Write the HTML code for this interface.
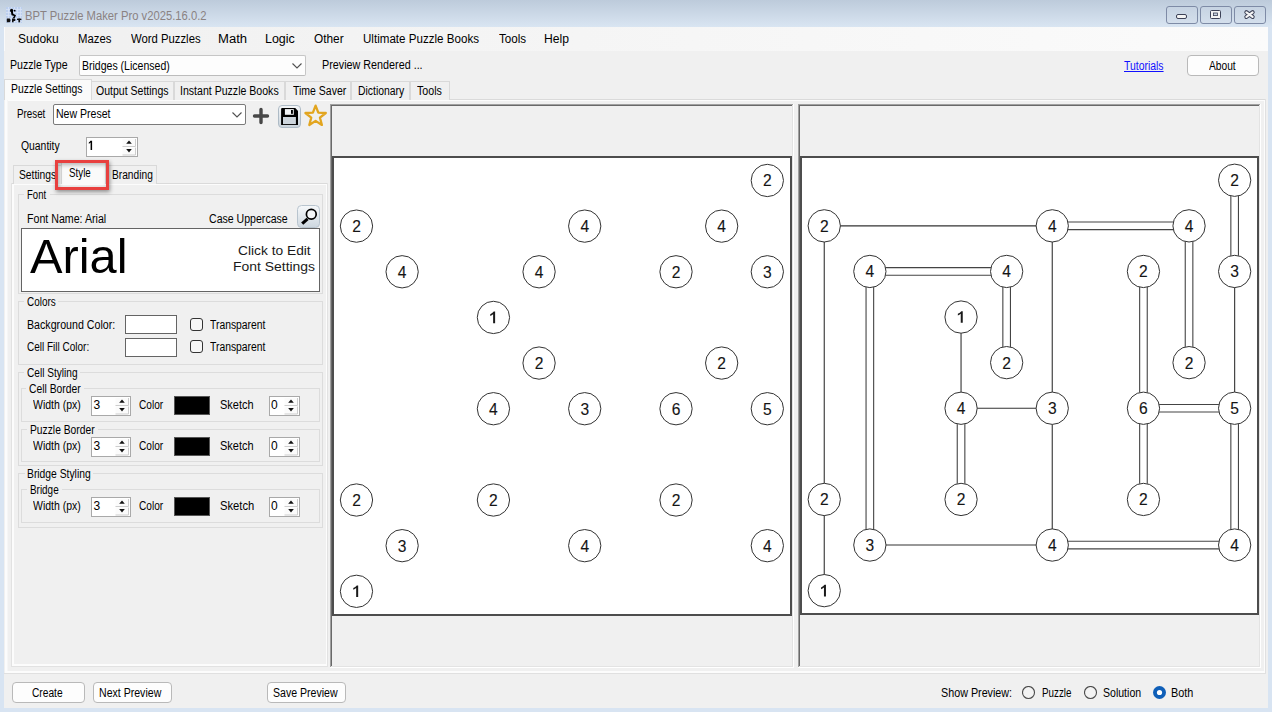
<!DOCTYPE html><html><head><meta charset="utf-8"><style>
html,body{margin:0;padding:0;width:1272px;height:712px;overflow:hidden;background:#d8e4f2;font-family:"Liberation Sans",sans-serif}
.t{position:absolute;white-space:pre;transform-origin:0 0;font-family:"Liberation Sans",sans-serif;color:#000}
</style></head><body>
<div style="position:absolute;left:0;top:0;width:1272px;height:27px;background:linear-gradient(#bdcbdb,#d9e5f2)"></div>
<div style="position:absolute;left:4px;top:27px;width:1264px;height:681px;background:#f0f0f0"></div>
<svg style="position:absolute;left:6px;top:7px" width="16" height="16" viewBox="0 0 16 16">
<rect x="0" y="0" width="16" height="16" fill="#bccfee"/>
<path d="M0 2.5H16M0 5.5H16M0 8.5H16M0 11.5H16M0 14.5H16M2.5 0V16M5.5 0V16M8.5 0V16M11.5 0V16M14.5 0V16" stroke="#d8e3f6" stroke-width="0.8"/>
<circle cx="5.6" cy="3.4" r="1.6" fill="#000"/><circle cx="8.7" cy="3.7" r="0.9" fill="#000"/>
<path d="M4.8 4 L6.9 4 L7.2 6.8 L10 8.3 L8.6 11.2 L6.6 11.2 L8.1 9.1 L5.5 8.2 Z" fill="#000"/>
<path d="M0.8 11.6 H3.6 Q4.6 11.8 4.3 13 Q4.8 13.6 4.3 14.6 Q3.9 15.3 3.2 15.3 H0.8 Z" fill="#111"/>
<path d="M6 11.6 H8.4 Q9.6 11.8 9.4 13.2 Q9.2 14 8.2 14.1 H7.6 V15.3 H6 Z" fill="#111"/>
<rect x="11" y="11.6" width="4.4" height="1.4" fill="#111"/><rect x="12.4" y="11.6" width="1.7" height="3.7" fill="#111"/>
</svg>
<span id="t0" class="t" style="left:25.22px;top:9.00px;font-size:12px;line-height:14px;transform:scaleX(0.9364);color:#8a8282;">BPT Puzzle Maker Pro v2025.16.0.2</span>
<svg style="position:absolute;left:1166px;top:6px" width="32" height="18" viewBox="0 0 32 18"><defs><linearGradient id="wbmin" x1="0" y1="0" x2="0" y2="1"><stop offset="0" stop-color="#c6d3e2"/><stop offset="1" stop-color="#d4dfec"/></linearGradient></defs>
<rect x="0.5" y="0.5" width="31" height="17" rx="2.5" fill="url(#wbmin)" stroke="#7e8ba6"/><rect x="10.5" y="8.5" width="10" height="4" rx="1.5" fill="#f4f4f4" stroke="#3d4257" stroke-width="1"/></svg>
<svg style="position:absolute;left:1200px;top:6px" width="32" height="18" viewBox="0 0 32 18"><defs><linearGradient id="wbmax" x1="0" y1="0" x2="0" y2="1"><stop offset="0" stop-color="#c6d3e2"/><stop offset="1" stop-color="#d4dfec"/></linearGradient></defs>
<rect x="0.5" y="0.5" width="31" height="17" rx="2.5" fill="url(#wbmax)" stroke="#7e8ba6"/><rect x="10.5" y="4.5" width="10" height="8" rx="1" fill="#f4f4f4" stroke="#3d4257" stroke-width="1"/><rect x="13.5" y="7" width="4" height="2.6" fill="#c9d4e2" stroke="#3d4257" stroke-width="0.8"/></svg>
<svg style="position:absolute;left:1234px;top:6px" width="32" height="18" viewBox="0 0 32 18"><defs><linearGradient id="wbclose" x1="0" y1="0" x2="0" y2="1"><stop offset="0" stop-color="#c6d3e2"/><stop offset="1" stop-color="#d4dfec"/></linearGradient></defs>
<rect x="0.5" y="0.5" width="31" height="17" rx="2.5" fill="url(#wbclose)" stroke="#7e8ba6"/><path d="M12.4 6.3 L18.6 10.9 M18.6 6.3 L12.4 10.9" stroke="#3d4257" stroke-width="4.2" stroke-linecap="round"/><path d="M12.4 6.3 L18.6 10.9 M18.6 6.3 L12.4 10.9" stroke="#f4f4f4" stroke-width="2.2" stroke-linecap="round"/></svg>
<div style="position:absolute;left:4px;top:27px;width:1264px;height:24px;background:linear-gradient(90deg,#f0f0f0,#fbfbfb)"></div>
<div style="position:absolute;left:4px;top:27px;width:1px;height:24px;background:#fafafa"></div>
<span id="t1" class="t" style="left:18.40px;top:32.00px;font-size:12px;line-height:14px;transform:scaleX(1.0026);color:#000;">Sudoku</span>
<span id="t2" class="t" style="left:77.56px;top:32.00px;font-size:12px;line-height:14px;transform:scaleX(0.9446);color:#000;">Mazes</span>
<span id="t3" class="t" style="left:130.50px;top:32.00px;font-size:12px;line-height:14px;transform:scaleX(0.9428);color:#000;">Word Puzzles</span>
<span id="t4" class="t" style="left:218.48px;top:32.00px;font-size:12px;line-height:14px;transform:scaleX(1.0884);color:#000;">Math</span>
<span id="t5" class="t" style="left:265.06px;top:32.00px;font-size:12px;line-height:14px;transform:scaleX(1.0390);color:#000;">Logic</span>
<span id="t6" class="t" style="left:314.42px;top:32.00px;font-size:12px;line-height:14px;transform:scaleX(0.9864);color:#000;">Other</span>
<span id="t7" class="t" style="left:362.64px;top:32.00px;font-size:12px;line-height:14px;transform:scaleX(0.9662);color:#000;">Ultimate Puzzle Books</span>
<span id="t8" class="t" style="left:498.84px;top:32.00px;font-size:12px;line-height:14px;transform:scaleX(0.9676);color:#000;">Tools</span>
<span id="t9" class="t" style="left:544.22px;top:32.00px;font-size:12px;line-height:14px;transform:scaleX(1.0124);color:#000;">Help</span>
<span id="t10" class="t" style="left:10.22px;top:58.00px;font-size:12px;line-height:14px;transform:scaleX(0.8839);color:#000;">Puzzle Type</span>
<div style="position:absolute;left:79px;top:55px;width:227px;height:21px;background:#fdfdfd;border:1px solid #c6c6c6;border-bottom-color:#bcbcbc;box-sizing:border-box;border-radius:2px"></div>
<span id="t11" class="t" style="left:82.22px;top:59.00px;font-size:12px;line-height:14px;transform:scaleX(0.8772);color:#000;">Bridges (Licensed)</span>
<svg style="position:absolute;left:291px;top:61.5px" width="12" height="8" viewBox="0 0 12 8"><path d="M1.5 1.5 L6 6 L10.5 1.5" fill="none" stroke="#505050" stroke-width="1.1"/></svg>
<span id="t12" class="t" style="left:322.22px;top:58.00px;font-size:12px;line-height:14px;transform:scaleX(0.8979);color:#000;">Preview Rendered ...</span>
<span id="t13" class="t" style="left:1124.00px;top:59.00px;font-size:12px;line-height:14px;transform:scaleX(0.8680);color:#1010ff;text-decoration:underline">Tutorials</span>
<div style="position:absolute;left:1187px;top:55px;width:72px;height:21px;background:#fdfdfd;border:1px solid #b9b9b9;box-sizing:border-box;border-radius:4px"></div>
<span id="t14" class="t" style="left:1209.16px;top:59.00px;font-size:12px;line-height:14px;transform:scaleX(0.8501);color:#000;">About</span>
<div style="position:absolute;left:4px;top:99px;width:1262px;height:1px;background:#dadada"></div>
<div style="position:absolute;left:5px;top:100px;width:1260px;height:1px;background:#fcfcfc"></div>
<div style="position:absolute;left:5px;top:100px;width:2px;height:572px;background:#fcfcfc"></div>
<div style="position:absolute;left:7px;top:100px;width:1px;height:572px;background:#f6f6f6"></div>
<div style="position:absolute;left:1264px;top:100px;width:1px;height:573px;background:#fcfcfc"></div>
<div style="position:absolute;left:1265px;top:99px;width:1px;height:575px;background:#e0e0e0"></div>
<div style="position:absolute;left:5px;top:671px;width:1260px;height:2px;background:#fcfcfc"></div>
<div style="position:absolute;left:4px;top:673px;width:1262px;height:1px;background:#e0e0e0"></div>
<div style="position:absolute;left:91px;top:81px;width:83.4px;height:19px;background:#f0f0f0;border:1px solid #d9d9d9;border-bottom:none;box-sizing:border-box"></div>
<div style="position:absolute;left:174.4px;top:81px;width:110.9px;height:19px;background:#f0f0f0;border:1px solid #d9d9d9;border-bottom:none;box-sizing:border-box"></div>
<div style="position:absolute;left:285.3px;top:81px;width:65.80000000000001px;height:19px;background:#f0f0f0;border:1px solid #d9d9d9;border-bottom:none;box-sizing:border-box"></div>
<div style="position:absolute;left:351.1px;top:81px;width:59.19999999999999px;height:19px;background:#f0f0f0;border:1px solid #d9d9d9;border-bottom:none;box-sizing:border-box"></div>
<div style="position:absolute;left:410.3px;top:81px;width:40.0px;height:19px;background:#f0f0f0;border:1px solid #d9d9d9;border-bottom:none;box-sizing:border-box"></div>
<div style="position:absolute;left:4px;top:79px;width:88px;height:21px;background:#fafafa;border:1px solid #d9d9d9;border-bottom:none;box-sizing:border-box"></div>
<span id="t15" class="t" style="left:11.22px;top:82.00px;font-size:12px;line-height:14px;transform:scaleX(0.8652);color:#000;">Puzzle Settings</span>
<span id="t16" class="t" style="left:95.84px;top:84.00px;font-size:12px;line-height:14px;transform:scaleX(0.8777);color:#000;">Output Settings</span>
<span id="t17" class="t" style="left:180.48px;top:84.00px;font-size:12px;line-height:14px;transform:scaleX(0.8804);color:#000;">Instant Puzzle Books</span>
<span id="t18" class="t" style="left:292.84px;top:84.00px;font-size:12px;line-height:14px;transform:scaleX(0.8744);color:#000;">Time Saver</span>
<span id="t19" class="t" style="left:357.56px;top:84.00px;font-size:12px;line-height:14px;transform:scaleX(0.8666);color:#000;">Dictionary</span>
<span id="t20" class="t" style="left:417.16px;top:84.00px;font-size:12px;line-height:14px;transform:scaleX(0.8878);color:#000;">Tools</span>
<span id="t21" class="t" style="left:17.16px;top:107.00px;font-size:12px;line-height:14px;transform:scaleX(0.8169);color:#000;">Preset</span>
<div style="position:absolute;left:53px;top:104px;width:193px;height:21px;background:#fff;border:1px solid #7a7a7a;box-sizing:border-box;border-radius:2px"></div>
<span id="t22" class="t" style="left:55.72px;top:107.00px;font-size:12px;line-height:14px;transform:scaleX(0.8787);color:#000;">New Preset</span>
<svg style="position:absolute;left:231px;top:111px" width="12" height="8" viewBox="0 0 12 8"><path d="M1.5 1.5 L6 6 L10.5 1.5" fill="none" stroke="#505050" stroke-width="1.1"/></svg>
<svg style="position:absolute;left:252px;top:107px" width="18" height="18" viewBox="0 0 18 18"><path d="M9 2.5V15.5M2.5 9H15.5" stroke="#474747" stroke-width="3.4" stroke-linecap="round"/></svg>
<svg style="position:absolute;left:278px;top:105px" width="23" height="23" viewBox="0 0 23 23"><defs><linearGradient id="sg" x1="0" y1="0" x2="0" y2="1"><stop offset="0" stop-color="#f4f6f8"/><stop offset="1" stop-color="#c9d3db"/></linearGradient></defs>
<rect x="0.5" y="0.5" width="22" height="22" rx="3.5" fill="url(#sg)" stroke="#aebbc6"/>
<path d="M3.1 4.1 Q3.1 3.1 4.1 3.1 H17.3 L20 6 V20 H3.1 Z" fill="#000"/>
<rect x="6.9" y="4.1" width="8.9" height="5.7" fill="#f2f4f6"/><rect x="13" y="5" width="1.9" height="3.8" fill="#000"/>
<rect x="5" y="12" width="12.9" height="7.1" fill="#cdd5dc"/>
</svg>
<svg style="position:absolute;left:303px;top:103px" width="25" height="25" viewBox="0 0 25 25"><polygon points="12.60,2.60 15.30,9.58 22.78,9.99 16.97,14.72 18.89,21.96 12.60,17.90 6.31,21.96 8.23,14.72 2.42,9.99 9.90,9.58" fill="none" stroke="#e2a51f" stroke-width="2.3" stroke-linejoin="round"/></svg>
<span id="t23" class="t" style="left:20.58px;top:139.00px;font-size:12px;line-height:14px;transform:scaleX(0.8651);color:#000;">Quantity</span>
<div style="position:absolute;left:86px;top:137px;width:52px;height:20px;background:#fff;border:1px solid #a9a9a9;box-sizing:border-box"></div>
<svg style="position:absolute;left:122px;top:137px" width="15" height="20" viewBox="0 0 15 20">
<rect x="0.5" y="2" width="13" height="7.5" fill="#fbfbfb"/><path d="M13.5 2V9.5H0.5" fill="none" stroke="#cdcdcd"/>
<rect x="0.5" y="10.5" width="13" height="7.5" fill="#fbfbfb"/><path d="M13.5 10.5V18H0.5" fill="none" stroke="#cdcdcd"/>
<path d="M7 3.4 L9.8 6.8 H4.2 Z" fill="#111"/>
<path d="M7 15.4 L9.8 12 H4.2 Z" fill="#111"/>
</svg>
<svg style="position:absolute;left:86px;top:138px" width="10" height="14" viewBox="0 0 10 14"><path d="M4.4 2.8 H6.1 V12 H4.6 V4.6 Q3.8 5.3 2.8 5.7 V4.4 Q3.8 3.8 4.4 2.8 Z" fill="#000"/></svg>
<div style="position:absolute;left:11px;top:183px;width:317px;height:1px;background:#dadada"></div>
<div style="position:absolute;left:12px;top:184px;width:314px;height:1px;background:#fcfcfc"></div>
<div style="position:absolute;left:11px;top:183px;width:1px;height:484px;background:#e2e2e2"></div>
<div style="position:absolute;left:12px;top:184px;width:2px;height:482px;background:#fcfcfc"></div>
<div style="position:absolute;left:326px;top:184px;width:1px;height:482px;background:#fcfcfc"></div>
<div style="position:absolute;left:327px;top:183px;width:1px;height:484px;background:#e2e2e2"></div>
<div style="position:absolute;left:12px;top:664px;width:315px;height:2px;background:#fcfcfc"></div>
<div style="position:absolute;left:11px;top:666px;width:317px;height:1px;background:#e2e2e2"></div>
<div style="position:absolute;left:13px;top:165px;width:49px;height:19px;background:#f0f0f0;border:1px solid #d9d9d9;border-bottom:none;box-sizing:border-box"></div>
<div style="position:absolute;left:105px;top:165px;width:52px;height:19px;background:#f0f0f0;border:1px solid #d9d9d9;border-bottom:none;box-sizing:border-box"></div>
<span id="t24" class="t" style="left:19.40px;top:168.00px;font-size:12px;line-height:14px;transform:scaleX(0.8581);color:#000;">Settings</span>
<div style="position:absolute;left:61px;top:162px;width:45px;height:22px;background:#fafafa;border:1px solid #d9d9d9;border-bottom:none;box-sizing:border-box"></div>
<span id="t25" class="t" style="left:69.42px;top:166.00px;font-size:12px;line-height:14px;transform:scaleX(0.8148);color:#000;">Style</span>
<span id="t26" class="t" style="left:111.60px;top:168.00px;font-size:12px;line-height:14px;transform:scaleX(0.8500);color:#000;">Branding</span>
<div style="position:absolute;left:18px;top:194px;width:305px;height:100px;border:1px solid #dcdcdc;box-sizing:border-box"></div>
<div style="position:absolute;left:24.4px;top:193px;width:25.6px;height:3px;background:#f0f0f0"></div>
<span id="t27" class="t" style="left:27.16px;top:188.00px;font-size:12px;line-height:14px;transform:scaleX(0.7946);color:#000;">Font</span>
<span id="t28" class="t" style="left:26.56px;top:212.00px;font-size:12px;line-height:14px;transform:scaleX(0.8862);color:#000;">Font Name: Arial</span>
<span id="t29" class="t" style="left:209.16px;top:212.00px;font-size:12px;line-height:14px;transform:scaleX(0.8807);color:#000;">Case Uppercase</span>
<svg style="position:absolute;left:297px;top:205px" width="23" height="23" viewBox="0 0 23 23"><defs><linearGradient id="mg" x1="0" y1="0" x2="0" y2="1"><stop offset="0" stop-color="#f6f8fa"/><stop offset="1" stop-color="#cdd7df"/></linearGradient></defs>
<rect x="0.5" y="0.5" width="22" height="22" rx="4" fill="url(#mg)" stroke="#b8c4ce"/>
<circle cx="14.3" cy="9.2" r="4.9" fill="#f4f6f8" stroke="#000" stroke-width="1.7"/>
<path d="M10.6 13.9 L5.2 18.6" stroke="#000" stroke-width="3.2"/></svg>
<div style="position:absolute;left:21px;top:228px;width:299px;height:64px;background:#fff;border:1px solid #646464;box-sizing:border-box"></div>
<span id="t30" class="t" style="left:30.08px;top:230.00px;font-size:48px;line-height:53px;transform:scaleX(1.0154);color:#000;">Arial</span>
<span id="t31" class="t" style="left:238.08px;top:243.00px;font-size:13.7px;line-height:15px;transform:scaleX(1.0057);color:#1a1a1a;">Click to Edit</span>
<span id="t32" class="t" style="left:233.48px;top:259.00px;font-size:13.7px;line-height:15px;transform:scaleX(1.0175);color:#1a1a1a;">Font Settings</span>
<div style="position:absolute;left:18px;top:301px;width:305px;height:64px;border:1px solid #dcdcdc;box-sizing:border-box"></div>
<div style="position:absolute;left:23.7px;top:300px;width:34.8px;height:3px;background:#f0f0f0"></div>
<span id="t33" class="t" style="left:26.58px;top:295.00px;font-size:12px;line-height:14px;transform:scaleX(0.8266);color:#000;">Colors</span>
<span id="t34" class="t" style="left:26.56px;top:318.00px;font-size:12px;line-height:14px;transform:scaleX(0.8877);color:#000;">Background Color:</span>
<div style="position:absolute;left:125px;top:315px;width:52px;height:19px;background:#fff;border:1px solid #646464;box-sizing:border-box"></div>
<div style="position:absolute;left:190px;top:318px;width:13px;height:13px;background:#f7f7f7;border:1px solid #333;box-sizing:border-box;border-radius:3px"></div>
<span id="t35" class="t" style="left:209.84px;top:318.00px;font-size:12px;line-height:14px;transform:scaleX(0.8632);color:#000;">Transparent</span>
<span id="t36" class="t" style="left:27.00px;top:340.00px;font-size:12px;line-height:14px;transform:scaleX(0.8327);color:#000;">Cell Fill Color:</span>
<div style="position:absolute;left:125px;top:338px;width:52px;height:19px;background:#fff;border:1px solid #646464;box-sizing:border-box"></div>
<div style="position:absolute;left:190px;top:340px;width:13px;height:13px;background:#f7f7f7;border:1px solid #333;box-sizing:border-box;border-radius:3px"></div>
<span id="t37" class="t" style="left:209.84px;top:340.00px;font-size:12px;line-height:14px;transform:scaleX(0.8632);color:#000;">Transparent</span>
<div style="position:absolute;left:18px;top:372px;width:305px;height:94px;border:1px solid #dcdcdc;box-sizing:border-box"></div>
<div style="position:absolute;left:23.7px;top:371px;width:56.5px;height:3px;background:#f0f0f0"></div>
<span id="t38" class="t" style="left:26.58px;top:366.00px;font-size:12px;line-height:14px;transform:scaleX(0.8418);color:#000;">Cell Styling</span>
<div style="position:absolute;left:21px;top:388px;width:299px;height:34px;border:1px solid #dcdcdc;box-sizing:border-box"></div>
<div style="position:absolute;left:26.3px;top:387px;width:57.7px;height:3px;background:#f0f0f0"></div>
<span id="t39" class="t" style="left:29.42px;top:382.00px;font-size:12px;line-height:14px;transform:scaleX(0.8598);color:#000;">Cell Border</span>
<span id="t40" class="t" style="left:33.08px;top:398.00px;font-size:12px;line-height:14px;transform:scaleX(0.8748);color:#000;">Width (px)</span>
<div style="position:absolute;left:91px;top:396px;width:40px;height:20px;background:#fff;border:1px solid #a9a9a9;box-sizing:border-box"></div>
<svg style="position:absolute;left:115px;top:396px" width="15" height="20" viewBox="0 0 15 20">
<rect x="0.5" y="2" width="13" height="7.5" fill="#fbfbfb"/><path d="M13.5 2V9.5H0.5" fill="none" stroke="#cdcdcd"/>
<rect x="0.5" y="10.5" width="13" height="7.5" fill="#fbfbfb"/><path d="M13.5 10.5V18H0.5" fill="none" stroke="#cdcdcd"/>
<path d="M7 3.4 L9.8 6.8 H4.2 Z" fill="#111"/>
<path d="M7 15.4 L9.8 12 H4.2 Z" fill="#111"/>
</svg>
<span id="t41" class="t" style="left:93.40px;top:398.00px;font-size:12px;line-height:14px;color:#000;">3</span>
<span id="t42" class="t" style="left:139.16px;top:398.00px;font-size:12px;line-height:14px;transform:scaleX(0.8425);color:#000;">Color</span>
<div style="position:absolute;left:174px;top:396px;width:36px;height:19px;background:#000;border:1px solid #555;box-sizing:border-box"></div>
<span id="t43" class="t" style="left:219.82px;top:398.00px;font-size:12px;line-height:14px;transform:scaleX(0.9168);color:#000;">Sketch</span>
<div style="position:absolute;left:269px;top:396px;width:31px;height:20px;background:#fff;border:1px solid #a9a9a9;box-sizing:border-box"></div>
<svg style="position:absolute;left:284px;top:396px" width="15" height="20" viewBox="0 0 15 20">
<rect x="0.5" y="2" width="13" height="7.5" fill="#fbfbfb"/><path d="M13.5 2V9.5H0.5" fill="none" stroke="#cdcdcd"/>
<rect x="0.5" y="10.5" width="13" height="7.5" fill="#fbfbfb"/><path d="M13.5 10.5V18H0.5" fill="none" stroke="#cdcdcd"/>
<path d="M7 3.4 L9.8 6.8 H4.2 Z" fill="#111"/>
<path d="M7 15.4 L9.8 12 H4.2 Z" fill="#111"/>
</svg>
<span id="t44" class="t" style="left:270.90px;top:398.00px;font-size:12px;line-height:14px;color:#000;">0</span>
<div style="position:absolute;left:21px;top:429px;width:299px;height:33px;border:1px solid #dcdcdc;box-sizing:border-box"></div>
<div style="position:absolute;left:27px;top:428px;width:70.6px;height:3px;background:#f0f0f0"></div>
<span id="t45" class="t" style="left:30.00px;top:423.00px;font-size:12px;line-height:14px;transform:scaleX(0.8566);color:#000;">Puzzle Border</span>
<span id="t46" class="t" style="left:33.08px;top:439.00px;font-size:12px;line-height:14px;transform:scaleX(0.8748);color:#000;">Width (px)</span>
<div style="position:absolute;left:91px;top:437px;width:40px;height:20px;background:#fff;border:1px solid #a9a9a9;box-sizing:border-box"></div>
<svg style="position:absolute;left:115px;top:437px" width="15" height="20" viewBox="0 0 15 20">
<rect x="0.5" y="2" width="13" height="7.5" fill="#fbfbfb"/><path d="M13.5 2V9.5H0.5" fill="none" stroke="#cdcdcd"/>
<rect x="0.5" y="10.5" width="13" height="7.5" fill="#fbfbfb"/><path d="M13.5 10.5V18H0.5" fill="none" stroke="#cdcdcd"/>
<path d="M7 3.4 L9.8 6.8 H4.2 Z" fill="#111"/>
<path d="M7 15.4 L9.8 12 H4.2 Z" fill="#111"/>
</svg>
<span id="t47" class="t" style="left:93.40px;top:439.00px;font-size:12px;line-height:14px;color:#000;">3</span>
<span id="t48" class="t" style="left:139.16px;top:439.00px;font-size:12px;line-height:14px;transform:scaleX(0.8425);color:#000;">Color</span>
<div style="position:absolute;left:174px;top:437px;width:36px;height:19px;background:#000;border:1px solid #555;box-sizing:border-box"></div>
<span id="t49" class="t" style="left:219.82px;top:439.00px;font-size:12px;line-height:14px;transform:scaleX(0.9168);color:#000;">Sketch</span>
<div style="position:absolute;left:269px;top:437px;width:31px;height:20px;background:#fff;border:1px solid #a9a9a9;box-sizing:border-box"></div>
<svg style="position:absolute;left:284px;top:437px" width="15" height="20" viewBox="0 0 15 20">
<rect x="0.5" y="2" width="13" height="7.5" fill="#fbfbfb"/><path d="M13.5 2V9.5H0.5" fill="none" stroke="#cdcdcd"/>
<rect x="0.5" y="10.5" width="13" height="7.5" fill="#fbfbfb"/><path d="M13.5 10.5V18H0.5" fill="none" stroke="#cdcdcd"/>
<path d="M7 3.4 L9.8 6.8 H4.2 Z" fill="#111"/>
<path d="M7 15.4 L9.8 12 H4.2 Z" fill="#111"/>
</svg>
<span id="t50" class="t" style="left:270.90px;top:439.00px;font-size:12px;line-height:14px;color:#000;">0</span>
<div style="position:absolute;left:18px;top:473px;width:305px;height:55px;border:1px solid #dcdcdc;box-sizing:border-box"></div>
<div style="position:absolute;left:24.6px;top:472px;width:68.30000000000001px;height:3px;background:#f0f0f0"></div>
<span id="t51" class="t" style="left:26.64px;top:467.00px;font-size:12px;line-height:14px;transform:scaleX(0.8601);color:#000;">Bridge Styling</span>
<div style="position:absolute;left:21px;top:489px;width:299px;height:34px;border:1px solid #dcdcdc;box-sizing:border-box"></div>
<div style="position:absolute;left:27.4px;top:488px;width:34.9px;height:3px;background:#f0f0f0"></div>
<span id="t52" class="t" style="left:30.40px;top:483.00px;font-size:12px;line-height:14px;transform:scaleX(0.8257);color:#000;">Bridge</span>
<span id="t53" class="t" style="left:33.08px;top:499.00px;font-size:12px;line-height:14px;transform:scaleX(0.8748);color:#000;">Width (px)</span>
<div style="position:absolute;left:91px;top:497px;width:40px;height:20px;background:#fff;border:1px solid #a9a9a9;box-sizing:border-box"></div>
<svg style="position:absolute;left:115px;top:497px" width="15" height="20" viewBox="0 0 15 20">
<rect x="0.5" y="2" width="13" height="7.5" fill="#fbfbfb"/><path d="M13.5 2V9.5H0.5" fill="none" stroke="#cdcdcd"/>
<rect x="0.5" y="10.5" width="13" height="7.5" fill="#fbfbfb"/><path d="M13.5 10.5V18H0.5" fill="none" stroke="#cdcdcd"/>
<path d="M7 3.4 L9.8 6.8 H4.2 Z" fill="#111"/>
<path d="M7 15.4 L9.8 12 H4.2 Z" fill="#111"/>
</svg>
<span id="t54" class="t" style="left:93.40px;top:499.00px;font-size:12px;line-height:14px;color:#000;">3</span>
<span id="t55" class="t" style="left:139.16px;top:499.00px;font-size:12px;line-height:14px;transform:scaleX(0.8425);color:#000;">Color</span>
<div style="position:absolute;left:174px;top:497px;width:36px;height:19px;background:#000;border:1px solid #555;box-sizing:border-box"></div>
<span id="t56" class="t" style="left:219.82px;top:499.00px;font-size:12px;line-height:14px;transform:scaleX(0.9333);color:#000;">Sketch</span>
<div style="position:absolute;left:269px;top:497px;width:31px;height:20px;background:#fff;border:1px solid #a9a9a9;box-sizing:border-box"></div>
<svg style="position:absolute;left:284px;top:497px" width="15" height="20" viewBox="0 0 15 20">
<rect x="0.5" y="2" width="13" height="7.5" fill="#fbfbfb"/><path d="M13.5 2V9.5H0.5" fill="none" stroke="#cdcdcd"/>
<rect x="0.5" y="10.5" width="13" height="7.5" fill="#fbfbfb"/><path d="M13.5 10.5V18H0.5" fill="none" stroke="#cdcdcd"/>
<path d="M7 3.4 L9.8 6.8 H4.2 Z" fill="#111"/>
<path d="M7 15.4 L9.8 12 H4.2 Z" fill="#111"/>
</svg>
<span id="t57" class="t" style="left:270.90px;top:499.00px;font-size:12px;line-height:14px;color:#000;">0</span>
<div style="position:absolute;left:58px;top:163px;width:48px;height:24px;background:rgba(250,250,250,.0)"></div><div style="position:absolute;left:55px;top:160px;width:54px;height:30px;border:3px solid #e8403f;box-sizing:border-box;box-shadow:1px 2px 4px rgba(0,0,0,.4), inset 1px 2px 4px rgba(0,0,0,.28)"></div>
<div style="position:absolute;left:12px;top:682px;width:73px;height:21px;background:#fdfdfd;border:1px solid #b9b9b9;box-sizing:border-box;border-radius:4px"></div>
<span id="t58" class="t" style="left:31.50px;top:686.00px;font-size:12px;line-height:14px;transform:scaleX(0.8497);color:#000;">Create</span>
<div style="position:absolute;left:93px;top:682px;width:79px;height:21px;background:#fdfdfd;border:1px solid #b9b9b9;box-sizing:border-box;border-radius:4px"></div>
<span id="t59" class="t" style="left:99.22px;top:686.00px;font-size:12px;line-height:14px;transform:scaleX(0.8808);color:#000;">Next Preview</span>
<div style="position:absolute;left:267px;top:682px;width:79px;height:21px;background:#fdfdfd;border:1px solid #b9b9b9;box-sizing:border-box;border-radius:4px"></div>
<span id="t60" class="t" style="left:273.42px;top:686.00px;font-size:12px;line-height:14px;transform:scaleX(0.8809);color:#000;">Save Preview</span>
<span id="t61" class="t" style="left:941.00px;top:686.00px;font-size:12px;line-height:14px;transform:scaleX(0.8958);color:#000;">Show Preview:</span>
<svg style="position:absolute;left:1022px;top:686px" width="14" height="14" viewBox="0 0 14 14"><circle cx="6.5" cy="6.5" r="6" fill="#f3f3f3" stroke="#4a4a4a" stroke-width="1.1"/></svg>
<span id="t62" class="t" style="left:1041.84px;top:686.00px;font-size:12px;line-height:14px;transform:scaleX(0.8175);color:#000;">Puzzle</span>
<svg style="position:absolute;left:1083.5px;top:686px" width="14" height="14" viewBox="0 0 14 14"><circle cx="6.5" cy="6.5" r="6" fill="#f3f3f3" stroke="#4a4a4a" stroke-width="1.1"/></svg>
<span id="t63" class="t" style="left:1102.90px;top:686.00px;font-size:12px;line-height:14px;transform:scaleX(0.8794);color:#000;">Solution</span>
<svg style="position:absolute;left:1153px;top:686px" width="14" height="14" viewBox="0 0 14 14"><circle cx="6.5" cy="6.5" r="6.5" fill="#0f5fb8"/><circle cx="6.5" cy="6.5" r="2.6" fill="#fff"/></svg>
<span id="t64" class="t" style="left:1171.14px;top:686.00px;font-size:12px;line-height:14px;transform:scaleX(0.9049);color:#000;">Both</span>
<div style="position:absolute;left:330px;top:104px;width:464px;height:564px;background:#f0f0f0"></div>
<div style="position:absolute;left:330px;top:104px;width:464px;height:1px;background:#a0a0a0"></div>
<div style="position:absolute;left:330px;top:104px;width:1px;height:564px;background:#a0a0a0"></div>
<div style="position:absolute;left:331px;top:105px;width:462px;height:1px;background:#696969"></div>
<div style="position:absolute;left:331px;top:105px;width:1px;height:562px;background:#696969"></div>
<div style="position:absolute;left:330px;top:667px;width:464px;height:1px;background:#ffffff"></div>
<div style="position:absolute;left:793px;top:104px;width:1px;height:564px;background:#ffffff"></div>
<div style="position:absolute;left:331px;top:666px;width:462px;height:1px;background:#e3e3e3"></div>
<div style="position:absolute;left:792px;top:105px;width:1px;height:562px;background:#e3e3e3"></div>
<div style="position:absolute;left:798px;top:104px;width:463px;height:564px;background:#f0f0f0"></div>
<div style="position:absolute;left:798px;top:104px;width:463px;height:1px;background:#a0a0a0"></div>
<div style="position:absolute;left:798px;top:104px;width:1px;height:564px;background:#a0a0a0"></div>
<div style="position:absolute;left:799px;top:105px;width:461px;height:1px;background:#696969"></div>
<div style="position:absolute;left:799px;top:105px;width:1px;height:562px;background:#696969"></div>
<div style="position:absolute;left:798px;top:667px;width:463px;height:1px;background:#ffffff"></div>
<div style="position:absolute;left:1260px;top:104px;width:1px;height:564px;background:#ffffff"></div>
<div style="position:absolute;left:799px;top:666px;width:461px;height:1px;background:#e3e3e3"></div>
<div style="position:absolute;left:1259px;top:105px;width:1px;height:562px;background:#e3e3e3"></div>
<svg style="position:absolute;left:332px;top:156px" width="460" height="460" viewBox="0 0 460 460"><rect x="0" y="0" width="460" height="460" fill="#fff"/><rect x="1" y="1" width="458" height="458" fill="none" stroke="#4d4d4d" stroke-width="2"/><circle cx="435.32" cy="24.47" r="16.15" fill="#fff" stroke="#333" stroke-width="1"/><text x="435.32" y="30.38" text-anchor="middle" font-family="Liberation Sans" font-size="15.6" fill="#151515" stroke="#151515" stroke-width="0.12">2</text><circle cx="24.47" cy="70.12" r="16.15" fill="#fff" stroke="#333" stroke-width="1"/><text x="24.47" y="76.03" text-anchor="middle" font-family="Liberation Sans" font-size="15.6" fill="#151515" stroke="#151515" stroke-width="0.12">2</text><circle cx="252.72" cy="70.12" r="16.15" fill="#fff" stroke="#333" stroke-width="1"/><text x="252.72" y="76.03" text-anchor="middle" font-family="Liberation Sans" font-size="15.6" fill="#151515" stroke="#151515" stroke-width="0.12">4</text><circle cx="389.67" cy="70.12" r="16.15" fill="#fff" stroke="#333" stroke-width="1"/><text x="389.67" y="76.03" text-anchor="middle" font-family="Liberation Sans" font-size="15.6" fill="#151515" stroke="#151515" stroke-width="0.12">4</text><circle cx="70.12" cy="115.78" r="16.15" fill="#fff" stroke="#333" stroke-width="1"/><text x="70.12" y="121.68" text-anchor="middle" font-family="Liberation Sans" font-size="15.6" fill="#151515" stroke="#151515" stroke-width="0.12">4</text><circle cx="207.07" cy="115.78" r="16.15" fill="#fff" stroke="#333" stroke-width="1"/><text x="207.07" y="121.68" text-anchor="middle" font-family="Liberation Sans" font-size="15.6" fill="#151515" stroke="#151515" stroke-width="0.12">4</text><circle cx="344.02" cy="115.78" r="16.15" fill="#fff" stroke="#333" stroke-width="1"/><text x="344.02" y="121.68" text-anchor="middle" font-family="Liberation Sans" font-size="15.6" fill="#151515" stroke="#151515" stroke-width="0.12">2</text><circle cx="435.32" cy="115.78" r="16.15" fill="#fff" stroke="#333" stroke-width="1"/><text x="435.32" y="121.68" text-anchor="middle" font-family="Liberation Sans" font-size="15.6" fill="#151515" stroke="#151515" stroke-width="0.12">3</text><circle cx="161.43" cy="161.43" r="16.15" fill="#fff" stroke="#333" stroke-width="1"/><path d="M163.12 155.62 V167.23 H161.12 V158.23 Q159.83 159.33 158.23 159.93 V158.23 Q160.43 157.23 161.73 155.62 Z" fill="#1a1a1a"/><circle cx="207.07" cy="207.07" r="16.15" fill="#fff" stroke="#333" stroke-width="1"/><text x="207.07" y="212.97" text-anchor="middle" font-family="Liberation Sans" font-size="15.6" fill="#151515" stroke="#151515" stroke-width="0.12">2</text><circle cx="389.67" cy="207.07" r="16.15" fill="#fff" stroke="#333" stroke-width="1"/><text x="389.67" y="212.97" text-anchor="middle" font-family="Liberation Sans" font-size="15.6" fill="#151515" stroke="#151515" stroke-width="0.12">2</text><circle cx="161.43" cy="252.72" r="16.15" fill="#fff" stroke="#333" stroke-width="1"/><text x="161.43" y="258.62" text-anchor="middle" font-family="Liberation Sans" font-size="15.6" fill="#151515" stroke="#151515" stroke-width="0.12">4</text><circle cx="252.72" cy="252.72" r="16.15" fill="#fff" stroke="#333" stroke-width="1"/><text x="252.72" y="258.62" text-anchor="middle" font-family="Liberation Sans" font-size="15.6" fill="#151515" stroke="#151515" stroke-width="0.12">3</text><circle cx="344.02" cy="252.72" r="16.15" fill="#fff" stroke="#333" stroke-width="1"/><text x="344.02" y="258.62" text-anchor="middle" font-family="Liberation Sans" font-size="15.6" fill="#151515" stroke="#151515" stroke-width="0.12">6</text><circle cx="435.32" cy="252.72" r="16.15" fill="#fff" stroke="#333" stroke-width="1"/><text x="435.32" y="258.62" text-anchor="middle" font-family="Liberation Sans" font-size="15.6" fill="#151515" stroke="#151515" stroke-width="0.12">5</text><circle cx="24.47" cy="344.02" r="16.15" fill="#fff" stroke="#333" stroke-width="1"/><text x="24.47" y="349.92" text-anchor="middle" font-family="Liberation Sans" font-size="15.6" fill="#151515" stroke="#151515" stroke-width="0.12">2</text><circle cx="161.43" cy="344.02" r="16.15" fill="#fff" stroke="#333" stroke-width="1"/><text x="161.43" y="349.92" text-anchor="middle" font-family="Liberation Sans" font-size="15.6" fill="#151515" stroke="#151515" stroke-width="0.12">2</text><circle cx="344.02" cy="344.02" r="16.15" fill="#fff" stroke="#333" stroke-width="1"/><text x="344.02" y="349.92" text-anchor="middle" font-family="Liberation Sans" font-size="15.6" fill="#151515" stroke="#151515" stroke-width="0.12">2</text><circle cx="70.12" cy="389.67" r="16.15" fill="#fff" stroke="#333" stroke-width="1"/><text x="70.12" y="395.57" text-anchor="middle" font-family="Liberation Sans" font-size="15.6" fill="#151515" stroke="#151515" stroke-width="0.12">3</text><circle cx="252.72" cy="389.67" r="16.15" fill="#fff" stroke="#333" stroke-width="1"/><text x="252.72" y="395.57" text-anchor="middle" font-family="Liberation Sans" font-size="15.6" fill="#151515" stroke="#151515" stroke-width="0.12">4</text><circle cx="435.32" cy="389.67" r="16.15" fill="#fff" stroke="#333" stroke-width="1"/><text x="435.32" y="395.57" text-anchor="middle" font-family="Liberation Sans" font-size="15.6" fill="#151515" stroke="#151515" stroke-width="0.12">4</text><circle cx="24.47" cy="435.32" r="16.15" fill="#fff" stroke="#333" stroke-width="1"/><path d="M26.17 429.52 V441.12 H24.17 V432.12 Q22.87 433.22 21.27 433.82 V432.12 Q23.47 431.12 24.77 429.52 Z" fill="#1a1a1a"/></svg>
<svg style="position:absolute;left:800px;top:156px" width="459" height="459" viewBox="0 0 459 459"><rect x="0" y="0" width="459" height="459" fill="#fff"/><rect x="1" y="1" width="457" height="457" fill="none" stroke="#4d4d4d" stroke-width="2"/><line x1="24.25" y1="69.85000000000001" x2="252.25" y2="69.85000000000001" stroke="#333" stroke-width="1.1"/><line x1="252.25" y1="66.05000000000001" x2="389.05" y2="66.05000000000001" stroke="#444" stroke-width="1.1"/><line x1="252.25" y1="73.65" x2="389.05" y2="73.65" stroke="#444" stroke-width="1.1"/><line x1="24.25" y1="69.85000000000001" x2="24.25" y2="343.45" stroke="#333" stroke-width="1.1"/><line x1="24.25" y1="343.45" x2="24.25" y2="434.65" stroke="#333" stroke-width="1.1"/><line x1="252.25" y1="69.85000000000001" x2="252.25" y2="252.25" stroke="#333" stroke-width="1.1"/><line x1="252.25" y1="252.25" x2="252.25" y2="389.05" stroke="#333" stroke-width="1.1"/><line x1="385.25" y1="69.85000000000001" x2="385.25" y2="206.65" stroke="#444" stroke-width="1.1"/><line x1="392.85" y1="69.85000000000001" x2="392.85" y2="206.65" stroke="#444" stroke-width="1.1"/><line x1="430.84999999999997" y1="24.25" x2="430.84999999999997" y2="115.45" stroke="#444" stroke-width="1.1"/><line x1="438.45" y1="24.25" x2="438.45" y2="115.45" stroke="#444" stroke-width="1.1"/><line x1="434.65" y1="115.45" x2="434.65" y2="252.25" stroke="#333" stroke-width="1.1"/><line x1="69.85000000000001" y1="111.65" x2="206.65" y2="111.65" stroke="#444" stroke-width="1.1"/><line x1="69.85000000000001" y1="119.25" x2="206.65" y2="119.25" stroke="#444" stroke-width="1.1"/><line x1="66.05000000000001" y1="115.45" x2="66.05000000000001" y2="389.05" stroke="#444" stroke-width="1.1"/><line x1="73.65" y1="115.45" x2="73.65" y2="389.05" stroke="#444" stroke-width="1.1"/><line x1="202.85" y1="115.45" x2="202.85" y2="206.65" stroke="#444" stroke-width="1.1"/><line x1="210.45000000000002" y1="115.45" x2="210.45000000000002" y2="206.65" stroke="#444" stroke-width="1.1"/><line x1="161.04999999999998" y1="161.04999999999998" x2="161.04999999999998" y2="252.25" stroke="#333" stroke-width="1.1"/><line x1="161.04999999999998" y1="252.25" x2="252.25" y2="252.25" stroke="#333" stroke-width="1.1"/><line x1="157.24999999999997" y1="252.25" x2="157.24999999999997" y2="343.45" stroke="#444" stroke-width="1.1"/><line x1="164.85" y1="252.25" x2="164.85" y2="343.45" stroke="#444" stroke-width="1.1"/><line x1="339.65" y1="115.45" x2="339.65" y2="252.25" stroke="#444" stroke-width="1.1"/><line x1="347.25" y1="115.45" x2="347.25" y2="252.25" stroke="#444" stroke-width="1.1"/><line x1="343.45" y1="248.45" x2="434.65" y2="248.45" stroke="#444" stroke-width="1.1"/><line x1="343.45" y1="256.05" x2="434.65" y2="256.05" stroke="#444" stroke-width="1.1"/><line x1="339.65" y1="252.25" x2="339.65" y2="343.45" stroke="#444" stroke-width="1.1"/><line x1="347.25" y1="252.25" x2="347.25" y2="343.45" stroke="#444" stroke-width="1.1"/><line x1="430.84999999999997" y1="252.25" x2="430.84999999999997" y2="389.05" stroke="#444" stroke-width="1.1"/><line x1="438.45" y1="252.25" x2="438.45" y2="389.05" stroke="#444" stroke-width="1.1"/><line x1="69.85000000000001" y1="389.05" x2="252.25" y2="389.05" stroke="#333" stroke-width="1.1"/><line x1="252.25" y1="385.25" x2="434.65" y2="385.25" stroke="#444" stroke-width="1.1"/><line x1="252.25" y1="392.85" x2="434.65" y2="392.85" stroke="#444" stroke-width="1.1"/><circle cx="434.65" cy="24.25" r="16.15" fill="#fff" stroke="#333" stroke-width="1"/><text x="434.65" y="30.15" text-anchor="middle" font-family="Liberation Sans" font-size="15.6" fill="#151515" stroke="#151515" stroke-width="0.12">2</text><circle cx="24.25" cy="69.85" r="16.15" fill="#fff" stroke="#333" stroke-width="1"/><text x="24.25" y="75.75" text-anchor="middle" font-family="Liberation Sans" font-size="15.6" fill="#151515" stroke="#151515" stroke-width="0.12">2</text><circle cx="252.25" cy="69.85" r="16.15" fill="#fff" stroke="#333" stroke-width="1"/><text x="252.25" y="75.75" text-anchor="middle" font-family="Liberation Sans" font-size="15.6" fill="#151515" stroke="#151515" stroke-width="0.12">4</text><circle cx="389.05" cy="69.85" r="16.15" fill="#fff" stroke="#333" stroke-width="1"/><text x="389.05" y="75.75" text-anchor="middle" font-family="Liberation Sans" font-size="15.6" fill="#151515" stroke="#151515" stroke-width="0.12">4</text><circle cx="69.85" cy="115.45" r="16.15" fill="#fff" stroke="#333" stroke-width="1"/><text x="69.85" y="121.35" text-anchor="middle" font-family="Liberation Sans" font-size="15.6" fill="#151515" stroke="#151515" stroke-width="0.12">4</text><circle cx="206.65" cy="115.45" r="16.15" fill="#fff" stroke="#333" stroke-width="1"/><text x="206.65" y="121.35" text-anchor="middle" font-family="Liberation Sans" font-size="15.6" fill="#151515" stroke="#151515" stroke-width="0.12">4</text><circle cx="343.45" cy="115.45" r="16.15" fill="#fff" stroke="#333" stroke-width="1"/><text x="343.45" y="121.35" text-anchor="middle" font-family="Liberation Sans" font-size="15.6" fill="#151515" stroke="#151515" stroke-width="0.12">2</text><circle cx="434.65" cy="115.45" r="16.15" fill="#fff" stroke="#333" stroke-width="1"/><text x="434.65" y="121.35" text-anchor="middle" font-family="Liberation Sans" font-size="15.6" fill="#151515" stroke="#151515" stroke-width="0.12">3</text><circle cx="161.05" cy="161.05" r="16.15" fill="#fff" stroke="#333" stroke-width="1"/><path d="M162.75 155.25 V166.85 H160.75 V157.85 Q159.45 158.95 157.85 159.55 V157.85 Q160.05 156.85 161.35 155.25 Z" fill="#1a1a1a"/><circle cx="206.65" cy="206.65" r="16.15" fill="#fff" stroke="#333" stroke-width="1"/><text x="206.65" y="212.55" text-anchor="middle" font-family="Liberation Sans" font-size="15.6" fill="#151515" stroke="#151515" stroke-width="0.12">2</text><circle cx="389.05" cy="206.65" r="16.15" fill="#fff" stroke="#333" stroke-width="1"/><text x="389.05" y="212.55" text-anchor="middle" font-family="Liberation Sans" font-size="15.6" fill="#151515" stroke="#151515" stroke-width="0.12">2</text><circle cx="161.05" cy="252.25" r="16.15" fill="#fff" stroke="#333" stroke-width="1"/><text x="161.05" y="258.15" text-anchor="middle" font-family="Liberation Sans" font-size="15.6" fill="#151515" stroke="#151515" stroke-width="0.12">4</text><circle cx="252.25" cy="252.25" r="16.15" fill="#fff" stroke="#333" stroke-width="1"/><text x="252.25" y="258.15" text-anchor="middle" font-family="Liberation Sans" font-size="15.6" fill="#151515" stroke="#151515" stroke-width="0.12">3</text><circle cx="343.45" cy="252.25" r="16.15" fill="#fff" stroke="#333" stroke-width="1"/><text x="343.45" y="258.15" text-anchor="middle" font-family="Liberation Sans" font-size="15.6" fill="#151515" stroke="#151515" stroke-width="0.12">6</text><circle cx="434.65" cy="252.25" r="16.15" fill="#fff" stroke="#333" stroke-width="1"/><text x="434.65" y="258.15" text-anchor="middle" font-family="Liberation Sans" font-size="15.6" fill="#151515" stroke="#151515" stroke-width="0.12">5</text><circle cx="24.25" cy="343.45" r="16.15" fill="#fff" stroke="#333" stroke-width="1"/><text x="24.25" y="349.35" text-anchor="middle" font-family="Liberation Sans" font-size="15.6" fill="#151515" stroke="#151515" stroke-width="0.12">2</text><circle cx="161.05" cy="343.45" r="16.15" fill="#fff" stroke="#333" stroke-width="1"/><text x="161.05" y="349.35" text-anchor="middle" font-family="Liberation Sans" font-size="15.6" fill="#151515" stroke="#151515" stroke-width="0.12">2</text><circle cx="343.45" cy="343.45" r="16.15" fill="#fff" stroke="#333" stroke-width="1"/><text x="343.45" y="349.35" text-anchor="middle" font-family="Liberation Sans" font-size="15.6" fill="#151515" stroke="#151515" stroke-width="0.12">2</text><circle cx="69.85" cy="389.05" r="16.15" fill="#fff" stroke="#333" stroke-width="1"/><text x="69.85" y="394.95" text-anchor="middle" font-family="Liberation Sans" font-size="15.6" fill="#151515" stroke="#151515" stroke-width="0.12">3</text><circle cx="252.25" cy="389.05" r="16.15" fill="#fff" stroke="#333" stroke-width="1"/><text x="252.25" y="394.95" text-anchor="middle" font-family="Liberation Sans" font-size="15.6" fill="#151515" stroke="#151515" stroke-width="0.12">4</text><circle cx="434.65" cy="389.05" r="16.15" fill="#fff" stroke="#333" stroke-width="1"/><text x="434.65" y="394.95" text-anchor="middle" font-family="Liberation Sans" font-size="15.6" fill="#151515" stroke="#151515" stroke-width="0.12">4</text><circle cx="24.25" cy="434.65" r="16.15" fill="#fff" stroke="#333" stroke-width="1"/><path d="M25.95 428.85 V440.45 H23.95 V431.45 Q22.65 432.55 21.05 433.15 V431.45 Q23.25 430.45 24.55 428.85 Z" fill="#1a1a1a"/></svg>
</body></html>
